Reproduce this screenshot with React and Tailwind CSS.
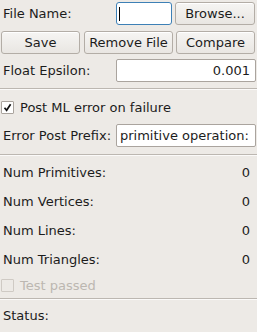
import React from "react";

const font = { fontFamily: '"DejaVu Sans", sans-serif' };

function Btn({ children, w }) {
  return (
    <div
      className={`${w} h-[23px] flex items-center justify-center rounded-[3px] border border-[#b3ada6] bg-gradient-to-b from-[#f6f5f3] to-[#e9e6e2] text-[13px] text-[#1c1c1c] shadow-[inset_0_1px_0_#ffffff]`}
    >
      {children}
    </div>
  );
}

function Sep() {
  return (
    <div className="flex flex-col">
      <div className="h-px bg-[#bcb7b1]" />
      <div className="h-px bg-[#fbfaf9]" />
    </div>
  );
}

function Stat({ label }) {
  return (
    <div className="h-[29px] flex items-center justify-between pl-[3px] pr-[7px]">
      <span>{label}</span>
      <span>0</span>
    </div>
  );
}

export default function App() {
  return (
    <div
      style={font}
      className="w-[257px] h-[332px] bg-[#edeae6] text-[13px] text-[#1c1c1c] overflow-hidden flex flex-col"
    >
      {/* Row 1 */}
      <div className="flex items-center h-[23px] mt-[2px]">
        <div className="w-[116px] pl-[3px]">File Name:</div>
        <div className="w-[56px] h-[23px] rounded-[3px] border border-[#3d80b6] bg-white flex items-center pl-[2px]">
          <div className="w-px h-[14px] bg-black" />
        </div>
        <div className="ml-[3px]">
          <Btn w="w-[80px]">Browse...</Btn>
        </div>
      </div>
      {/* Row 2 */}
      <div className="flex items-center mt-[6px] pl-[1px]">
        <Btn w="w-[79px]">Save</Btn>
        <div className="ml-[4px]">
          <Btn w="w-[89px]">Remove File</Btn>
        </div>
        <div className="ml-[3px]">
          <Btn w="w-[79px]">Compare</Btn>
        </div>
      </div>
      {/* Row 3 */}
      <div className="flex items-center mt-[5px]">
        <div className="w-[116px] pl-[3px]">Float Epsilon:</div>
        <div className="w-[140px] h-[23px] rounded-[2px] border border-[#aaa49e] bg-white flex items-center justify-end pr-[5px]">
          0.001
        </div>
      </div>
      <div className="mt-[6px]">
        <Sep />
      </div>
      {/* checkbox */}
      <div className="flex items-center mt-[11px] h-[13px] pl-px">
        <div className="w-[13px] h-[13px] border border-[#aaa49e] bg-white flex items-center justify-center rounded-[1px]">
          <svg width="9" height="9" viewBox="0 0 9 9">
            <path d="M1.5 4.8 L3.6 7.3 L7.6 1.2" stroke="#111" strokeWidth="1.7" fill="none" />
          </svg>
        </div>
        <span className="ml-[6px]">Post ML error on failure</span>
      </div>
      {/* Error prefix */}
      <div className="flex items-center mt-[10px]">
        <div className="w-[116px] pl-[3px] whitespace-nowrap">Error Post Prefix:</div>
        <div className="w-[140px] h-[23px] rounded-[2px] border border-[#aaa49e] bg-white flex items-center pl-[3px] whitespace-nowrap overflow-hidden">
          primitive operation:
        </div>
      </div>
      <div className="mt-[7px]">
        <Sep />
      </div>
      <div className="mt-[2px]">
        <Stat label="Num Primitives:" />
        <Stat label="Num Vertices:" />
        <Stat label="Num Lines:" />
        <Stat label="Num Triangles:" />
      </div>
      <div className="flex items-center h-[26px] pl-px text-[#bcb7b1]">
        <div className="w-[13px] h-[13px] border border-[#cfcac4] rounded-[1px]" />
        <span className="ml-[6px]">Test passed</span>
      </div>
      <div className="mt-[1px]">
        <Sep />
      </div>
      <div className="flex items-center h-[35px] pl-[3px]">Status:</div>
    </div>
  );
}
